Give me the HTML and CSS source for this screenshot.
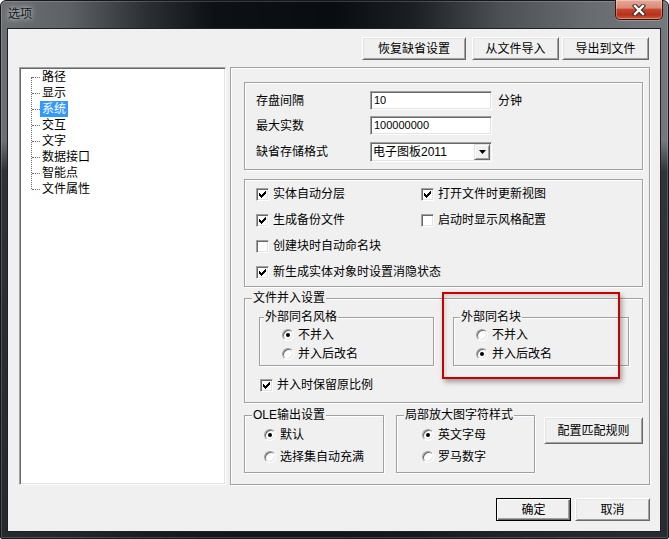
FILE: index.html
```html
<!DOCTYPE html>
<html lang="zh-CN">
<head>
<meta charset="utf-8">
<title>选项</title>
<link rel="stylesheet" href="styles.css">
</head>
<body>
<div class="window">
  <div class="titlebar">
    <span class="title">选项</span>
    <button class="close" aria-label="关闭">
      <svg width="14" height="12" viewBox="0 0 14 12"><path d="M3 2 L11 10 M11 2 L3 10" stroke="#2e2a2a" stroke-width="4.4" stroke-linecap="square" fill="none"/><path d="M3 2 L11 10 M11 2 L3 10" stroke="#fff" stroke-width="2.4" stroke-linecap="square" fill="none"/></svg>
    </button>
  </div>
  <div class="client">
    <div class="toolbar">
      <button class="btn btn-restore">恢复缺省设置</button>
      <button class="btn btn-import">从文件导入</button>
      <button class="btn btn-export">导出到文件</button>
    </div>
    <div class="main">
      <div class="tree">
        <ul class="tree-list">
          <li><span class="node">路径</span></li>
          <li><span class="node">显示</span></li>
          <li><span class="node selected">系统</span></li>
          <li><span class="node">交互</span></li>
          <li><span class="node">文字</span></li>
          <li><span class="node">数据接口</span></li>
          <li><span class="node">智能点</span></li>
          <li><span class="node">文件属性</span></li>
        </ul>
      </div>
      <div class="panel">
        <div class="group g-save">
          <div class="frow r1"><span class="flabel">存盘间隔</span><span class="input">10</span><span class="unit">分钟</span></div>
          <div class="frow r2"><span class="flabel">最大实数</span><span class="input">100000000</span></div>
          <div class="frow r3"><span class="flabel">缺省存储格式</span><span class="combo"><span class="combo-text">电子图板2011</span><span class="combo-btn"><svg width="7" height="4" viewBox="0 0 7 4"><path d="M0 0h7L3.5 4z" fill="#000"/></svg></span></span></div>
        </div>
        <div class="group g-checks">
          <div class="check"><span class="cb"><svg class="tick" width="7" height="7" viewBox="0 0 7 7"><path d="M0 2h1v3H0zM1 3h1v3H1zM2 4h1v3H2zM3 3h1v3H3zM4 2h1v3H4zM5 1h1v3H5zM6 0h1v3H6z"/></svg></span><span>实体自动分层</span></div>
          <div class="check"><span class="cb"><svg class="tick" width="7" height="7" viewBox="0 0 7 7"><path d="M0 2h1v3H0zM1 3h1v3H1zM2 4h1v3H2zM3 3h1v3H3zM4 2h1v3H4zM5 1h1v3H5zM6 0h1v3H6z"/></svg></span><span>打开文件时更新视图</span></div>
          <div class="check"><span class="cb"><svg class="tick" width="7" height="7" viewBox="0 0 7 7"><path d="M0 2h1v3H0zM1 3h1v3H1zM2 4h1v3H2zM3 3h1v3H3zM4 2h1v3H4zM5 1h1v3H5zM6 0h1v3H6z"/></svg></span><span>生成备份文件</span></div>
          <div class="check"><span class="cb"></span><span>启动时显示风格配置</span></div>
          <div class="check wide"><span class="cb"></span><span>创建块时自动命名块</span></div>
          <div class="check wide"><span class="cb"><svg class="tick" width="7" height="7" viewBox="0 0 7 7"><path d="M0 2h1v3H0zM1 3h1v3H1zM2 4h1v3H2zM3 3h1v3H3zM4 2h1v3H4zM5 1h1v3H5zM6 0h1v3H6z"/></svg></span><span>新生成实体对象时设置消隐状态</span></div>
        </div>
        <div class="group g-merge">
          <div class="legend">文件并入设置</div>
          <div class="subgroups">
            <div class="group sub sub-left">
              <div class="legend">外部同名风格</div>
              <div class="radios">
                <div class="radio"><span class="rb"><span class="dot"></span></span><span>不并入</span></div>
                <div class="radio"><span class="rb"></span><span>并入后改名</span></div>
              </div>
            </div>
            <div class="group sub sub-right">
              <div class="legend">外部同名块</div>
              <div class="radios">
                <div class="radio"><span class="rb"></span><span>不并入</span></div>
                <div class="radio"><span class="rb"><span class="dot"></span></span><span>并入后改名</span></div>
              </div>
            </div>
          </div>
          <div class="check keep"><span class="cb"><svg class="tick" width="7" height="7" viewBox="0 0 7 7"><path d="M0 2h1v3H0zM1 3h1v3H1zM2 4h1v3H2zM3 3h1v3H3zM4 2h1v3H4zM5 1h1v3H5zM6 0h1v3H6z"/></svg></span><span>并入时保留原比例</span></div>
        </div>
        <div class="bottom-row">
          <div class="group g-ole">
            <div class="legend">OLE输出设置</div>
            <div class="radios">
              <div class="radio"><span class="rb"><span class="dot"></span></span><span>默认</span></div>
              <div class="radio"><span class="rb"></span><span>选择集自动充满</span></div>
            </div>
          </div>
          <div class="group g-zoom">
            <div class="legend">局部放大图字符样式</div>
            <div class="radios">
              <div class="radio"><span class="rb"><span class="dot"></span></span><span>英文字母</span></div>
              <div class="radio"><span class="rb"></span><span>罗马数字</span></div>
            </div>
          </div>
          <button class="btn btn-rules">配置匹配规则</button>
        </div>
        <div class="annot"></div>
      </div>
    </div>
    <div class="footer">
      <button class="btn btn-default btn-ok">确定</button>
      <button class="btn btn-cancel">取消</button>
    </div>
  </div>
</div>
</body>
</html>
```
FILE: styles.css
```css
* { box-sizing: border-box; }
html, body { margin: 0; padding: 0; }
body {
  width: 669px;
  height: 539px;
  overflow: hidden;
  background: #ffffff;
  font: 12px/14px "Liberation Sans", "Noto Sans CJK SC", sans-serif;
  color: #000;
}

/* ---------- window frame ---------- */
.window {
  width: 669px;
  height: 539px;
  border: 1px solid #15181b;
  border-radius: 6px 6px 2px 2px;
  display: flex;
  flex-direction: column;
  background:
    linear-gradient(180deg, rgba(0,0,0,0) 0, rgba(0,0,0,0) 140px, rgba(20,23,27,0.7) 170px, rgba(20,23,27,0.8) 100%),
    linear-gradient(90deg, #6c7074 0%, #5e6266 10%, #2b2f33 22%, #0d1014 32%, #090c10 50%, #1c1f23 62%, #4d5155 75%, #686b6f 88%, #75787c 100%);
  box-shadow: inset 0 0 0 1px rgba(255,255,255,0.18);
}
.titlebar {
  height: 27px;
  flex: none;
  display: flex;
  align-items: flex-start;
}
.title {
  margin: 5px 0 0 7px;
  line-height: 16px;
  font-size: 12px;
  color: #101820;
  text-shadow: 0 0 4px rgba(255,255,255,0.75), 0 0 8px rgba(255,255,255,0.45);
}
.close {
  margin: -1px 5px 0 auto;
  width: 48px;
  height: 20px;
  padding: 0;
  display: flex;
  align-items: center;
  justify-content: center;
  border: 1px solid #3a1410;
  border-top: 0;
  border-radius: 0 0 5px 5px;
  background: linear-gradient(180deg, #e7a899 0%, #d98a78 42%, #c6462d 50%, #b8301b 78%, #d05a3a 100%);
  box-shadow: inset 0 0 0 1px rgba(255,255,255,0.3), 0 1px 0 rgba(255,255,255,0.25);
}
.close svg { display: block; }

.client {
  flex: 1;
  margin: 0 7px 6px 6px;
  border: 1px solid #1d2024;
  background: #f0f0f0;
  display: flex;
  flex-direction: column;
}

/* ---------- buttons ---------- */
.btn {
  font: inherit;
  color: #000;
  margin: 0;
  padding: 0;
  height: 23px;
  line-height: 20px;
  background: #f0f0f0;
  border: 1px solid;
  border-color: #ffffff #696969 #696969 #ffffff;
  box-shadow: inset 1px 1px 0 #e3e3e3, inset -1px -1px 0 #a0a0a0;
  text-align: center;
}
.btn-default {
  border: 1px solid #000;
  box-shadow: inset 1px 1px 0 #fff, inset -1px -1px 0 #696969, inset -2px -2px 0 #a0a0a0;
}

.toolbar {
  flex: none;
  display: flex;
  justify-content: flex-end;
  padding: 8px 11px 0 0;
}
.btn-restore { width: 104px; margin-right: 6px; }
.btn-import { width: 87px; margin-right: 3px; }
.btn-export { width: 87px; }

.main {
  flex: none;
  display: flex;
  margin-top: 7px;
  height: 418px;
  padding-left: 11px;
}

/* ---------- tree ---------- */
.tree {
  width: 207px;
  height: 418px;
  background: #fff;
  border: 1px solid;
  border-color: #a0a0a0 #ffffff #ffffff #a0a0a0;
  box-shadow: inset 1px 1px 0 #696969, inset -1px -1px 0 #e3e3e3;
  padding: 1px 0 0 1px;
}
.tree-list {
  list-style: none;
  margin: 0;
  padding: 0 0 0 19px;
  position: relative;
}
.tree-list::before {
  content: "";
  position: absolute;
  left: 10px;
  top: 8px;
  height: 112px;
  border-left: 1px dotted #6b6b6b;
}
.tree-list li {
  position: relative;
  height: 16px;
  line-height: 16px;
}
.tree-list li::before {
  content: "";
  position: absolute;
  left: -8px;
  top: 8px;
  width: 8px;
  border-top: 1px dotted #6b6b6b;
}
.node {
  display: inline-block;
  padding: 0 2px;
  height: 16px;
  line-height: 16px;
}
.node.selected {
  background: #3399ff;
  color: #fff;
}

/* ---------- right panel ---------- */
.panel {
  position: relative;
  margin-left: 4px;
  width: 420px;
  height: 418px;
  border: 1px solid #a0a0a0;
  box-shadow: 1px 1px 0 #fff, inset 1px 1px 0 #fff;
  padding: 14px 0 0 13px;
}
.group {
  border: 1px solid #a0a0a0;
  box-shadow: inset 1px 1px 0 #fff, 1px 1px 0 #fff;
}
.legend {
  width: max-content;
  height: 14px;
  line-height: 14px;
  margin: -8px 0 0 7px;
  padding: 0 1px;
  background: #f0f0f0;
}

/* group 1 */
.g-save {
  width: 399px;
  height: 88px;
  padding: 8px 0 0 11px;
}
.frow {
  display: flex;
  align-items: center;
}
.r1 { height: 19px; margin-bottom: 6px; }
.r2 { height: 19px; margin-bottom: 7px; }
.r3 { height: 20px; }
.flabel { width: 114px; }
.unit { margin-left: 6px; }
.input {
  width: 122px;
  height: 19px;
  background: #fff;
  border: 1px solid;
  border-color: #a0a0a0 #ffffff #ffffff #a0a0a0;
  box-shadow: inset 1px 1px 0 #696969, inset -1px -1px 0 #e3e3e3;
  padding-left: 3px;
  font-size: 11px;
  line-height: 17px;
}
.combo {
  width: 122px;
  height: 20px;
  background: #fff;
  border: 1px solid;
  border-color: #a0a0a0 #ffffff #ffffff #a0a0a0;
  box-shadow: inset 1px 1px 0 #696969, inset -1px -1px 0 #e3e3e3;
  padding: 1px;
  display: flex;
  align-items: center;
}
.combo-text {
  flex: 1;
  padding-left: 1px;
  line-height: 16px;
}
.combo-btn {
  width: 16px;
  height: 16px;
  background: #f0f0f0;
  border: 1px solid;
  border-color: #e3e3e3 #696969 #696969 #e3e3e3;
  box-shadow: inset 1px 1px 0 #fff, inset -1px -1px 0 #a0a0a0;
  display: flex;
  align-items: center;
  justify-content: center;
}
.combo-btn svg { display: block; }

/* group 2 */
.g-checks {
  margin-top: 9px;
  width: 399px;
  height: 108px;
  padding: 8px 0 0 11px;
  display: grid;
  grid-template-columns: 165px auto;
  grid-auto-rows: 13px;
  row-gap: 13px;
  align-content: start;
}
.check {
  display: flex;
  align-items: center;
  height: 13px;
  line-height: 13px;
  white-space: nowrap;
}
.check.wide { grid-column: 1 / span 2; }
.cb {
  flex: none;
  width: 13px;
  height: 13px;
  margin-right: 4px;
  background: #fff;
  border: 1px solid;
  border-color: #a0a0a0 #ffffff #ffffff #a0a0a0;
  box-shadow: inset 1px 1px 0 #696969, inset -1px -1px 0 #e3e3e3;
  padding: 2px;
}
.tick { display: block; fill: #000; shape-rendering: crispEdges; }

/* group 3 */
.g-merge {
  margin-top: 11px;
  width: 399px;
  height: 105px;
}
.subgroups {
  display: flex;
  margin: 12px 0 0 14px;
}
.sub { height: 49px; }
.sub-left { width: 175px; }
.sub-right { width: 176px; margin-left: 19px; }
.sub-left .legend { margin-left: 4px; }
.sub-right .legend { margin-left: 6px; }
.sub .radios { padding: 1px 0 0 22px; }
.sub .radio { height: 19px; }
.radio {
  display: flex;
  align-items: center;
  white-space: nowrap;
}
.rb {
  flex: none;
  width: 12px;
  height: 12px;
  margin-right: 4px;
  border-radius: 50%;
  background: #fff;
  border: 1px solid;
  border-color: #a0a0a0 #ffffff #ffffff #a0a0a0;
  box-shadow: inset 1px 1px 0 #696969, inset -1px -1px 0 #e3e3e3;
  display: flex;
  align-items: center;
  justify-content: center;
}
.dot {
  width: 4px;
  height: 4px;
  border-radius: 50%;
  background: #000;
}
.check.keep { margin: 13px 0 0 15px; }

/* bottom row */
.bottom-row {
  display: flex;
  align-items: flex-start;
  margin-top: 12px;
}
.g-ole { width: 140px; height: 58px; }
.g-zoom { width: 139px; height: 58px; margin-left: 12px; }
.g-ole .radios { padding: 2px 0 0 19px; }
.g-zoom .radios { padding: 2px 0 0 25px; }
.g-ole .radio, .g-zoom .radio { height: 22px; }
.btn-rules {
  width: 99px;
  height: 27px;
  margin: 2px 0 0 9px;
  line-height: 24px;
}

/* annotation overlay */
.annot {
  position: absolute;
  left: 211px;
  top: 224px;
  width: 178px;
  height: 87px;
  border: 2px solid #c80000;
  box-shadow: 2px 3px 5px rgba(0,0,0,0.35), inset 1px 2px 4px rgba(0,0,0,0.15);
  pointer-events: none;
}

/* footer */
.footer {
  flex: none;
  display: flex;
  justify-content: flex-end;
  margin-top: 13px;
  padding-right: 10px;
}
.btn-ok { width: 75px; margin-right: 4px; }
.btn-cancel { width: 75px; }
```
